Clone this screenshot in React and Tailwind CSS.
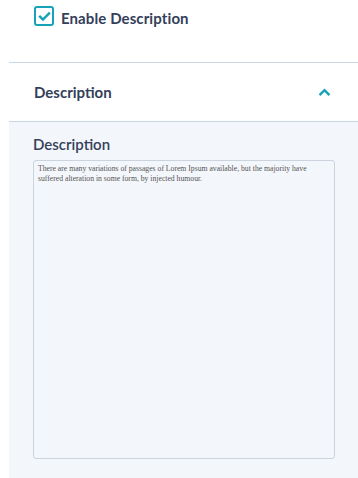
import React, { useState } from 'react';

export default function App() {
  const [enabled, setEnabled] = useState(true);
  const [open, setOpen] = useState(true);

  return (
    <div className="w-[358px] h-[478px] bg-white overflow-hidden" style={{ fontFamily: 'Lato, "Open Sans", sans-serif' }}>
      {/* Enable toggle */}
      <label className="flex gap-[7px] pl-[34px] pt-[6px] h-[62px] items-start cursor-pointer">
        <span
          onClick={() => setEnabled(!enabled)}
          className="w-[20px] h-[20px] rounded-[3px] border-2 border-[#16a2b8] bg-white flex items-center justify-center"
        >
          {enabled && (
            <svg viewBox="0 0 16 16" className="w-[13px] h-[13px]" fill="none" stroke="#16a2b8" strokeWidth="3" strokeLinecap="square">
              <path d="M2.5 8.2l3.6 3.5 7.4-7.4" />
            </svg>
          )}
        </span>
        <span className="text-[15px] font-bold text-[#34405a] leading-[24px] tracking-[0.1px]">Enable Description</span>
      </label>

      {/* Accordion */}
      <div className="ml-[9px] border-t border-[#c9d6e3]">
        <button
          onClick={() => setOpen(!open)}
          className="w-full h-[59px] flex items-center justify-between pl-[25px] pr-[27px] border-b border-[#c9d6e3]"
        >
          <span className="text-[15px] font-bold text-[#34405a]">Description</span>
          <svg viewBox="0 0 14 10" className="w-[13px] h-[9px]" fill="none" stroke="#16a2b8" strokeWidth="2.6">
            <path d={open ? 'M1.5 8l5.5-5.5 5.5 5.5' : 'M1.5 2l5.5 5.5 5.5-5.5'} />
          </svg>
        </button>

        {open && (
          <div className="bg-[#f3f6fa] h-[356px] pl-[24px] pr-[22px] pt-[12px]">
            <div className="text-[15px] font-semibold text-[#34405a] leading-[20px] mb-[6px]">Description</div>
            <textarea
              className="w-[302px] h-[299px] block resize-none border border-[#cbd3de] rounded-[3px] bg-[#f3f6fa] px-[4px] py-[3px] text-[7.7px] leading-[10px] text-[#555] outline-none"
              style={{ fontFamily: '"Liberation Serif", serif' }}
              defaultValue="There are many variations of passages of Lorem Ipsum available, but the majority have suffered alteration in some form, by injected humour."
            />
          </div>
        )}
      </div>
    </div>
  );
}
